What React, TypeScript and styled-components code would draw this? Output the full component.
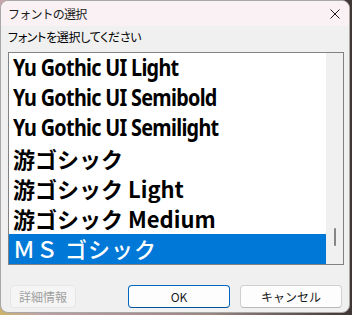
import React from "react";
import styled, { createGlobalStyle } from "styled-components";

const Global = createGlobalStyle`
  html, body {
    margin: 0;
    padding: 0;
    width: 352px;
    height: 315px;
    overflow: hidden;
  }
  body {
    background:
      radial-gradient(circle at 0% 100%, #c9b368 0, rgba(201,179,104,0) 40px),
      linear-gradient(90deg, #c7a6ad 0%, #9a8580 60%, #3f3636 100%);
    font-family: "Noto Sans CJK JP", "Noto Sans", sans-serif;
  }
`;

const Window = styled.div`
  box-sizing: border-box;
  width: 350px;
  height: 313px;
  border: 1px solid #a9a6a7;
  border-radius: 8px;
  overflow: hidden;
  display: flex;
  flex-direction: column;
  background: #f0f0f0;
`;

const TitleBar = styled.div`
  height: 25px;
  flex: none;
  background: #f9f1f3;
  display: flex;
  align-items: center;
  padding: 0 9px 0 7px;
`;

const Title = styled.div`
  flex: 1;
  font-size: 12px;
  letter-spacing: -0.8px;
  color: #1a1a1a;
  line-height: 16px;
`;

const Close = styled.div`
  width: 10px;
  height: 10px;
  display: flex;
`;

const Body = styled.div`
  flex: 1;
  display: flex;
  flex-direction: column;
  padding: 3px 5px 0 7px;
`;

const Label = styled.div`
  font-size: 12px;
  line-height: 16px;
  font-feature-settings: "palt" 1;
  letter-spacing: -0.3px;
  color: #000;
`;

const ListBox = styled.div`
  box-sizing: border-box;
  margin-top: 7px;
  width: 336px;
  height: 213px;
  border: 1px solid #828282;
  background: #fff;
  display: flex;
`;

const Items = styled.div`
  flex: 1;
  display: flex;
  flex-direction: column;
  justify-content: flex-end;
  overflow: hidden;
`;

type Kind = "latin" | "jp" | "ms";

const Row = styled.div<{ $selected?: boolean; $kind: Kind }>`
  flex: none;
  height: 30px;
  box-sizing: border-box;
  display: flex;
  align-items: center;
  padding: 0 0 ${(p) => (p.$kind === "latin" ? "5px" : "2px")} 4px;
  white-space: nowrap;
  background: ${(p) => (p.$selected ? "#0078d7" : "transparent")};
  color: ${(p) => (p.$selected ? "#fff" : "#000")};
`;

const Name = styled.span<{ $kind: Kind }>`
  display: inline-block;
  transform-origin: left center;
  transform: ${(p) => (p.$kind === "latin" ? "scaleX(0.86)" : "none")};
  font-family: ${(p) =>
    p.$kind === "latin"
      ? `"Noto Sans", sans-serif`
      : `"Noto Sans CJK JP", sans-serif`};
  font-weight: ${(p) => (p.$kind === "ms" ? 500 : 700)};
  font-size: ${(p) => (p.$kind === "latin" ? "23px" : "22px")};
  line-height: 26px;
  letter-spacing: ${(p) =>
    p.$kind === "latin" ? "-0.8px" : p.$kind === "ms" ? "1px" : "0"};
`;

const ScrollTrack = styled.div`
  width: 17px;
  background: #f0f0f0;
  display: flex;
  flex-direction: column;
  justify-content: flex-end;
  align-items: center;
  padding-bottom: 18px;
`;

const Thumb = styled.div`
  width: 2px;
  height: 18px;
  border-radius: 1px;
  background: #858585;
`;

const ButtonRow = styled.div`
  display: flex;
  align-items: center;
  margin-top: 20px;
  padding: 0 2px;
  gap: 10px;
`;

const Spacer = styled.div`
  flex: 1;
`;

const Button = styled.button<{ $width: number; $variant?: "default" | "disabled" }>`
  box-sizing: border-box;
  width: ${(p) => p.$width}px;
  height: 23px;
  padding: 0;
  margin: 0;
  border-radius: 4px;
  font-family: "Noto Sans CJK JP", "Noto Sans", sans-serif;
  font-size: 12px;
  line-height: 16px;
  border: 1px solid
    ${(p) =>
      p.$variant === "default"
        ? "#0067c0"
        : p.$variant === "disabled"
        ? "#e6e6e6"
        : "#d0d0d0"};
  border-bottom-color: ${(p) =>
    p.$variant === "default"
      ? "#00529a"
      : p.$variant === "disabled"
      ? "#e6e6e6"
      : "#b8b8b8"};
  background: ${(p) => (p.$variant === "disabled" ? "#f5f5f5" : "#fdfdfd")};
  color: ${(p) => (p.$variant === "disabled" ? "#a0a0a0" : "#1a1a1a")};
`;

const fonts: { name: string; kind: Kind; selected?: boolean }[] = [
  { name: "Yu Gothic UI Light", kind: "latin" },
  { name: "Yu Gothic UI Semibold", kind: "latin" },
  { name: "Yu Gothic UI Semilight", kind: "latin" },
  { name: "游ゴシック", kind: "jp" },
  { name: "游ゴシック Light", kind: "jp" },
  { name: "游ゴシック Medium", kind: "jp" },
  { name: "ＭＳ ゴシック", kind: "ms", selected: true },
];

export default function App() {
  return (
    <>
      <Global />
      <Window>
        <TitleBar>
          <Title>フォントの選択</Title>
          <Close>
            <svg width="10" height="10" viewBox="0 0 10 10">
              <path d="M0.5 0.5 L9.5 9.5 M9.5 0.5 L0.5 9.5" stroke="#1a1a1a" strokeWidth="1" />
            </svg>
          </Close>
        </TitleBar>
        <Body>
          <Label>フォントを選択してください</Label>
          <ListBox>
            <Items>
              {fonts.map((f) => (
                <Row key={f.name} $kind={f.kind} $selected={f.selected}>
                  <Name $kind={f.kind}>{f.name}</Name>
                </Row>
              ))}
            </Items>
            <ScrollTrack>
              <Thumb />
            </ScrollTrack>
          </ListBox>
          <ButtonRow>
            <Button $width={66} $variant="disabled" disabled>
              詳細情報
            </Button>
            <Spacer />
            <Button $width={102} $variant="default">
              OK
            </Button>
            <Button $width={102}>キャンセル</Button>
          </ButtonRow>
        </Body>
      </Window>
    </>
  );
}
